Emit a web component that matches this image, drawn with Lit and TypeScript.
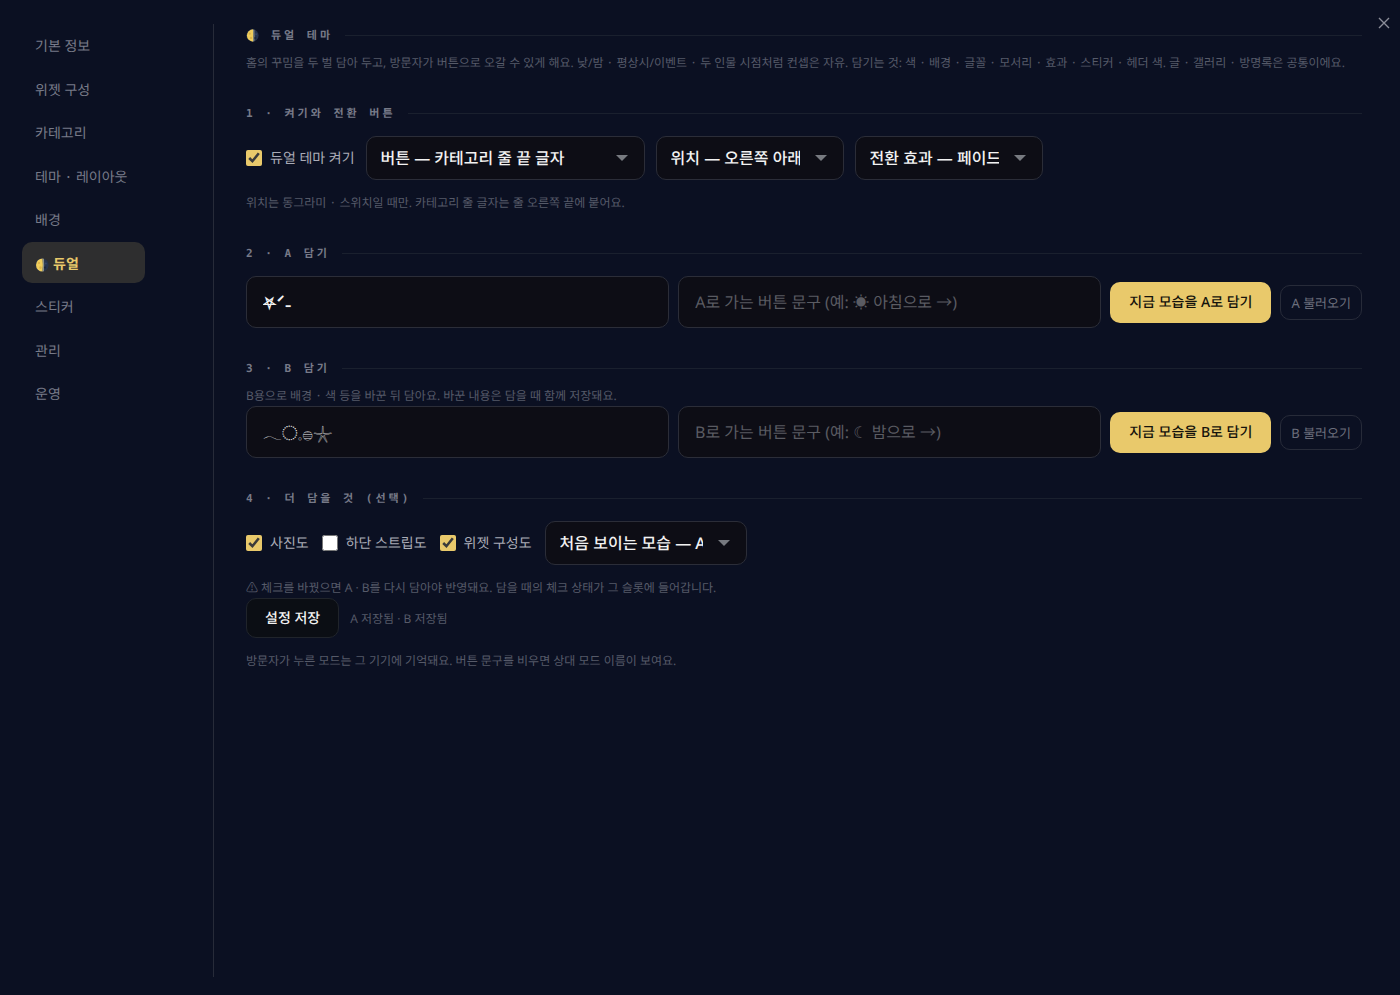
import { LitElement, html, css, svg } from "lit";
import { customElement, state } from "lit/decorators.js";
import { classMap } from "lit/directives/class-map.js";

const moon = html`<svg class="moon" viewBox="0 0 14 14" aria-hidden="true">
  ${svg`<circle cx="7" cy="7" r="6.6" fill="#26334d"></circle>
  <path d="M7.6 .4A6.6 6.6 0 1 0 7.6 13.6Q8.2 7 7.6 .4Z" fill="#f0cd5c"></path>
  <path d="M7.6 .5Q8.3 7 7.6 13.5L9 13.2Q9.4 7 9 .8Z" fill="#8a8f86"></path>
  <circle cx="4" cy="5" r="1.1" fill="#d9b047"></circle>
  <circle cx="5.4" cy="9.6" r="1.3" fill="#dcb54c"></circle>
  <circle cx="10.8" cy="5.6" r="1" fill="#34466a"></circle>
  <circle cx="10" cy="9.6" r="1.1" fill="#1c2740"></circle>`}
</svg>`;

const caret = html`<svg class="caret" viewBox="0 0 12 6" aria-hidden="true"><path d="M0 0H12L6 6Z" fill="currentColor"></path></svg>`;

// A middle dot in front of Hangul takes the wider Korean glyph.
const dotted = (text: string) =>
  text.split(/·(?= [가-힣])/).map((part, i) => (i ? html`<span class="dot">·</span>${part}` : part));

@customElement("app-root")
export class AppRoot extends LitElement {
  @state() private active = 5;

  private menu = ["기본 정보", "위젯 구성", "카테고리", "테마 · 레이아웃", "배경", "듀얼", "스티커", "관리", "운영"];

  static styles = css`
    * { box-sizing: border-box; }
    :host {
      display: block;
      min-height: 100vh;
      background: #0b1022;
      color: #b4b6c0;
      font-family: "Noto Sans", "Noto Sans CJK KR", sans-serif;
      font-size: 14px;
      text-rendering: geometricPrecision;
    }
    button, input, select { font-family: inherit; margin: 0; text-rendering: inherit; }
    .dot { font-family: "Noto Sans CJK KR", sans-serif; line-height: 1; }
    .page {
      display: flex;
      min-height: 100vh;
      padding: 24px 38px 18px 22px;
    }
    .side {
      flex: none;
      width: 192px;
      border-right: 1px solid #272b39;
    }
    .menu {
      display: flex;
      flex-direction: column;
      gap: 2px;
      width: 123px;
    }
    .item {
      display: flex;
      align-items: center;
      gap: 4px;
      padding: 12px 13px 8px;
      border: 0;
      border-radius: 10px;
      background: none;
      color: #777a88;
      font-size: 14px;
      line-height: 1.54;
      white-space: nowrap;
    }
    .item.on { background: #2e2e2f; color: #e9c96b; font-weight: 700; }
    .moon { flex: none; width: 14px; height: 14px; }
    .main { flex: 1; min-width: 0; padding-left: 32px; }
    .section { margin-bottom: 29px; }
    .title {
      display: flex;
      align-items: center;
      gap: 12px;
      margin: 0 0 6px;
      color: #777a88;
      font-family: "DejaVu Sans Mono", "Noto Sans CJK KR", monospace;
      font-size: 11px;
      font-weight: 700;
      line-height: 20px;
      letter-spacing: 3px;
    }
    .title span { padding-top: 2px; }
    .title::after { content: ""; flex: 1; height: 1px; background: #1a202e; }
    .title .moon { width: 13px; height: 13px; }
    .title + .row { margin-top: 12px; }
    .hint {
      margin: 0;
      padding-top: 1px;
      color: #565a69;
      font-size: 12px;
      line-height: 20px;
    }
    .row { display: flex; align-items: center; gap: 11px; }
    .row.slot { gap: 9px; }
    .row.extras { gap: 13px; }
    .row + .hint { margin-top: 12px; }
    .check { display: flex; align-items: center; gap: 8px; color: #a9abb6; font-size: 14px; white-space: nowrap; }
    .check input { width: 16px; height: 16px; accent-color: #e9c96b; }
    .pick { position: relative; color: #777a80; }
    .pick select {
      display: block;
      appearance: none;
      width: 100%;
      height: 44px;
      padding: 0 43px 0 14px;
      border: 1px solid #2b2d38;
      border-radius: 10px;
      background: #0d0d15;
      color: #f2f2f2;
      font-size: 16px;
      font-weight: 500;
      text-overflow: clip;
    }
    .wide { width: 279px; }
    .mid { width: 188px; }
    .first { width: 202px; }
    .caret { position: absolute; right: 17px; top: 19px; width: 12px; height: 6px; pointer-events: none; }
    .field { flex: 1; min-width: 0; }
    .field input {
      width: 100%;
      height: 52px;
      padding: 0 16px;
      border: 1px solid #2b2d38;
      border-radius: 10px;
      background: #0d0d15;
      color: #f2f2f2;
      font-size: 16px;
      display: block;
    }
    .field .name { font-family: "Noto Sans CJK KR", sans-serif; font-weight: 500; }
    .field .bold { font-weight: 700; }
    .field input::placeholder { color: #5a5b62; opacity: 1; }
    .solid, .ghost, .save { flex: none; border-radius: 10px; white-space: nowrap; }
    .solid { height: 41px; padding: 0 19px; border: 0; background: #e9c96b; color: #15130c; font-size: 14px; font-weight: 500; }
    .ghost { height: 35px; padding: 0 10px; border: 1px solid #272b39; background: none; color: #6b6e7c; font-size: 13px; }
    .save { height: 40px; padding: 0 18px; border: 1px solid #20242b; background: #0b0e14; color: #f2f2f2; font-size: 14px; font-weight: 500; }
    .close {
      position: absolute;
      top: 13px;
      right: 6px;
      width: 20px;
      height: 20px;
      padding: 4px;
      border: 0;
      background: none;
      color: #8b8d98;
    }
    .close svg { display: block; width: 12px; height: 12px; }
  `;

  private pick(cls: string, label: string, value: string) {
    return html`<div class="pick ${cls}"><select aria-label=${label}><option>${value}</option></select>${caret}</div>`;
  }

  private slotRow(name: string, value: string, hint: string) {
    return html`<div class="row slot">
      <div class="field"><input class=${classMap({ name: true, bold: name === "A" })} type="text" aria-label="${name} 이름" .value=${value} /></div>
      <div class="field"><input type="text" aria-label="${name} 버튼 문구" placeholder=${hint} /></div>
      <button class="solid">지금 모습을 ${name}로 담기</button>
      <button class="ghost">${name} 불러오기</button>
    </div>`;
  }

  render() {
    return html`
      <div class="page">
        <div class="side">
          <nav class="menu">
            ${this.menu.map((label, i) => html`<button
              class=${classMap({ item: true, on: i === this.active })}
              @click=${() => (this.active = i)}>${label === "듀얼" ? moon : ""}<span>${dotted(label)}</span></button>`)}
          </nav>
        </div>
        <main class="main">
          <section class="section">
            <h2 class="title">${moon}<span>듀얼 테마</span></h2>
            <p class="hint">${dotted("홈의 꾸밈을 두 벌 담아 두고, 방문자가 버튼으로 오갈 수 있게 해요. 낮/밤 · 평상시/이벤트 · 두 인물 시점처럼 컨셉은 자유. 담기는 것: 색 · 배경 · 글꼴 · 모서리 · 효과 · 스티커 · 헤더 색. 글 · 갤러리 · 방명록은 공통이에요.")}</p>
          </section>
          <section class="section">
            <h2 class="title"><span>1 · 켜기와 전환 버튼</span></h2>
            <div class="row">
              <label class="check"><input type="checkbox" checked />듀얼 테마 켜기</label>
              ${this.pick("wide", "버튼", "버튼 — 카테고리 줄 끝 글자")}
              ${this.pick("mid", "위치", "위치 — 오른쪽 아래")}
              ${this.pick("mid", "전환 효과", "전환 효과 — 페이드")}
            </div>
            <p class="hint">${dotted("위치는 동그라미 · 스위치일 때만. 카테고리 줄 글자는 줄 오른쪽 끝에 붙어요.")}</p>
          </section>
          <section class="section">
            <h2 class="title"><span>2 · A 담기</span></h2>
            ${this.slotRow("A", "⛧ˊ˗", "A로 가는 버튼 문구 (예: ☀ 아침으로 →)")}
          </section>
          <section class="section">
            <h2 class="title"><span>3 · B 담기</span></h2>
            <p class="hint">${dotted("B용으로 배경 · 색 등을 바꾼 뒤 담아요. 바꾼 내용은 담을 때 함께 저장돼요.")}</p>
            ${this.slotRow("B", "𓂃◌𓈒𓐍𓇼", "B로 가는 버튼 문구 (예: ☾ 밤으로 →)")}
          </section>
          <section class="section">
            <h2 class="title"><span>4 · 더 담을 것 (선택)</span></h2>
            <div class="row extras">
              <label class="check"><input type="checkbox" checked />사진도</label>
              <label class="check"><input type="checkbox" />하단 스트립도</label>
              <label class="check"><input type="checkbox" checked />위젯 구성도</label>
              ${this.pick("first", "처음 보이는 모습", "처음 보이는 모습 — A")}
            </div>
            <p class="hint">⚠ 체크를 바꿨으면 A · B를 다시 담아야 반영돼요. 담을 때의 체크 상태가 그 슬롯에 들어갑니다.</p>
            <div class="row">
              <button class="save">설정 저장</button>
              <span class="hint">A 저장됨 · B 저장됨</span>
            </div>
            <p class="hint">방문자가 누른 모드는 그 기기에 기억돼요. 버튼 문구를 비우면 상대 모드 이름이 보여요.</p>
          </section>
        </main>
        <button class="close" aria-label="닫기"><svg viewBox="0 0 12 12"><path d="M1 1L11 11M11 1L1 11" stroke="currentColor" stroke-width="1.4" fill="none"></path></svg></button>
      </div>`;
  }
}
